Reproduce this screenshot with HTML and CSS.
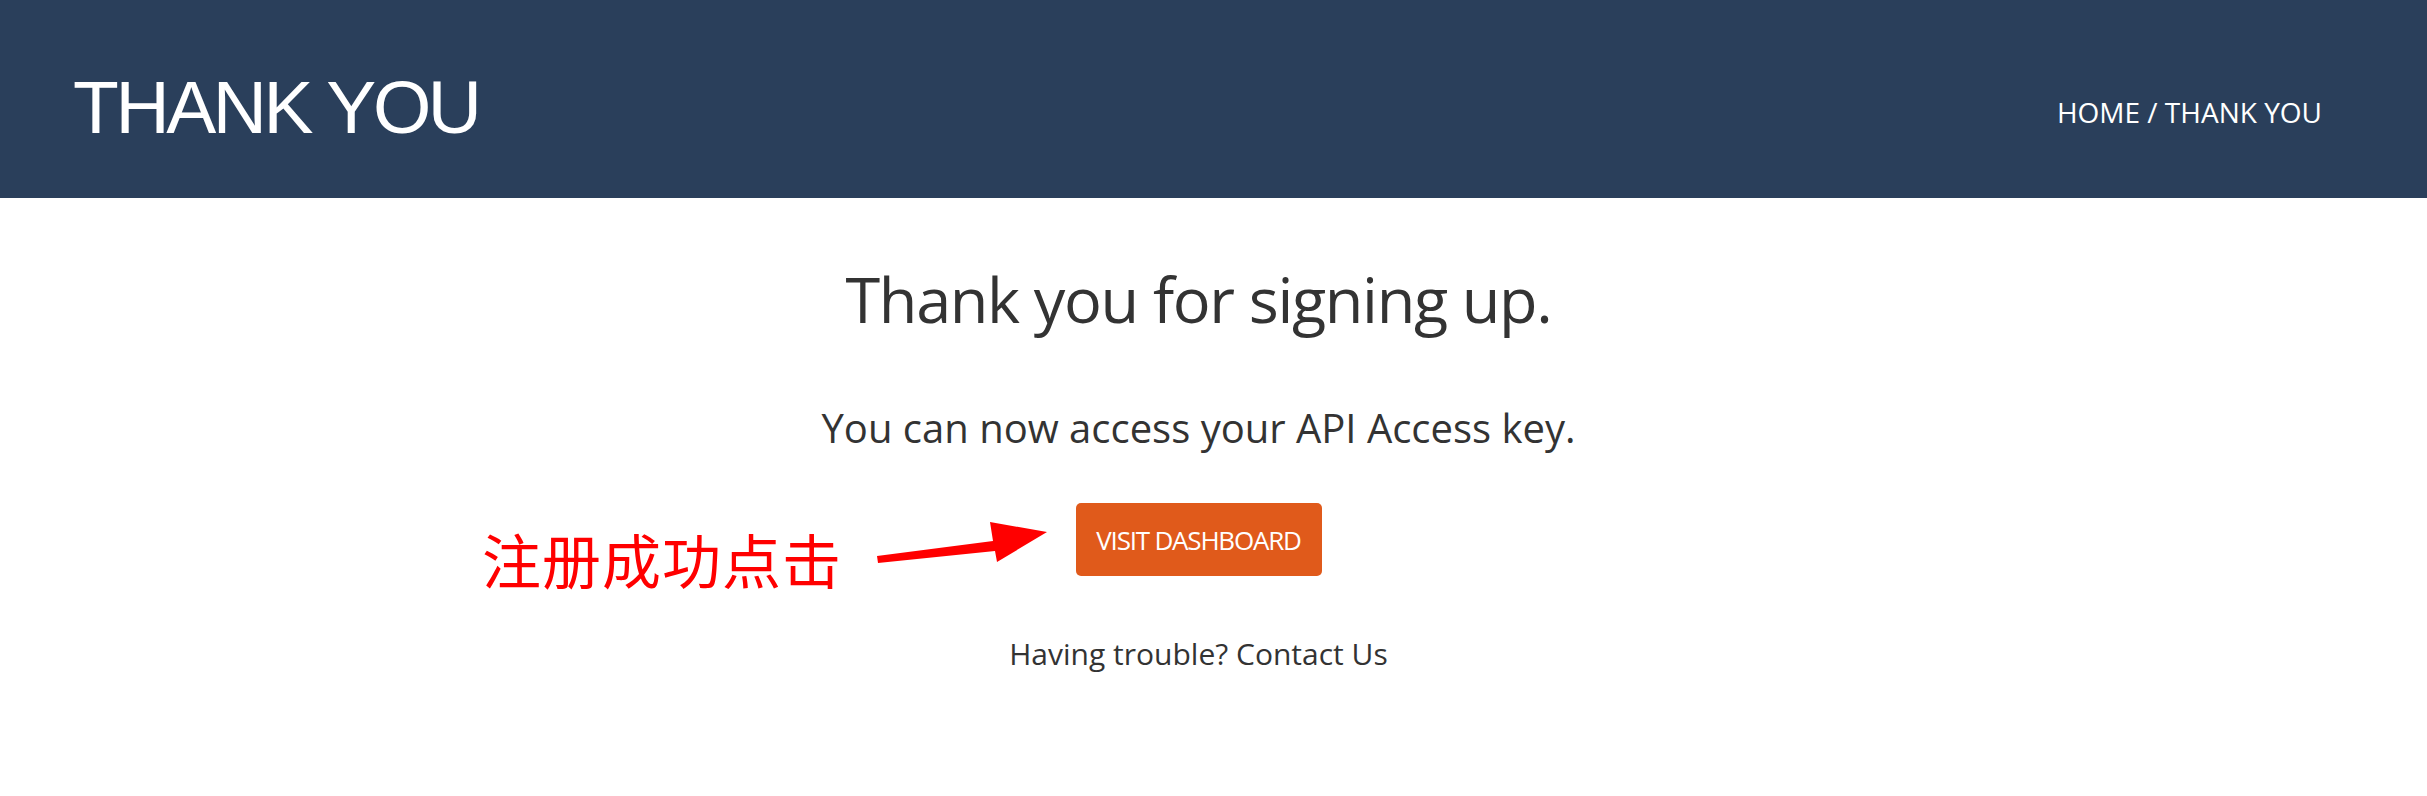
FILE: index.html
```html
<!DOCTYPE html>
<html lang="en">
<head>
    <meta charset="UTF-8">
    <title>Thank You</title>
    <link rel="stylesheet" href="styles.css">
</head>
<body>
    <header class="page-header">
        <h1 class="page-title">THANK YOU</h1>
        <div class="breadcrumb">HOME / THANK YOU</div>
    </header>

    <main class="thanks">
        <h2 class="thanks-title">Thank you for signing up.</h2>
        <p class="thanks-text">You can now access your API Access key.</p>
        <a class="btn-dashboard" href="#">VISIT DASHBOARD</a>
        <p class="thanks-help">Having trouble? Contact Us</p>
    </main>

    <!-- annotation drawn over the screenshot -->
    <div class="note">注册成功点击</div>
    <svg class="note-arrow" width="2427" height="796" viewBox="0 0 2427 796">
        <polygon points="877,556 993,541 990,522 1047,532 997,562 995,551 878,563" fill="#ff0000"/>
    </svg>
</body>
</html>
```

FILE: styles.css
```css
body {
    margin: 0;
    font-family: "Open Sans", Arial, sans-serif;
    color: #333333;
    background-color: #ffffff;
}
.page-header {
    height: 198px;
    background-color: #2a3f5b;
    color: #ffffff;
    display: flex;
    justify-content: space-between;
    align-items: flex-start;
    padding: 0 105px 0 73px;
}
.page-title {
    margin: 70px 0 0;
    font-family: "Liberation Sans", Arial, sans-serif;
    font-weight: normal;
    font-size: 75px;
    line-height: 1;
    letter-spacing: -3.4px;
}
.breadcrumb {
    margin-top: 98px;
    font-size: 28px;
    line-height: 1;
}
.thanks {
    display: flex;
    flex-direction: column;
    align-items: center;
    padding-right: 30px;
    text-align: center;
}
.thanks-title {
    margin: 69px 0 0;
    font-size: 63px;
    font-weight: normal;
    line-height: 1;
    letter-spacing: -1.35px;
}
.thanks-text {
    margin: 78px 0 0;
    font-size: 40px;
    line-height: 1;
}
.btn-dashboard {
    margin-top: 55px;
    width: 246px;
    height: 73px;
    box-sizing: border-box;
    display: flex;
    align-items: center;
    justify-content: center;
    background-color: #e05a1b;
    border-radius: 5px;
    color: #ffffff;
    text-decoration: none;
    font-size: 26px;
    letter-spacing: -1.2px;
}
.thanks-help {
    margin: 60px 0 0;
    font-size: 30px;
    line-height: 1.2;
}
.note {
    position: absolute;
    left: 482px;
    top: 529px;
    font-family: "Noto Sans CJK SC", sans-serif;
    font-size: 59px;
    line-height: 1;
    color: #ff0000;
    letter-spacing: 1px;
}
.note-arrow {
    position: absolute;
    left: 0;
    top: 0;
    pointer-events: none;
}
```
